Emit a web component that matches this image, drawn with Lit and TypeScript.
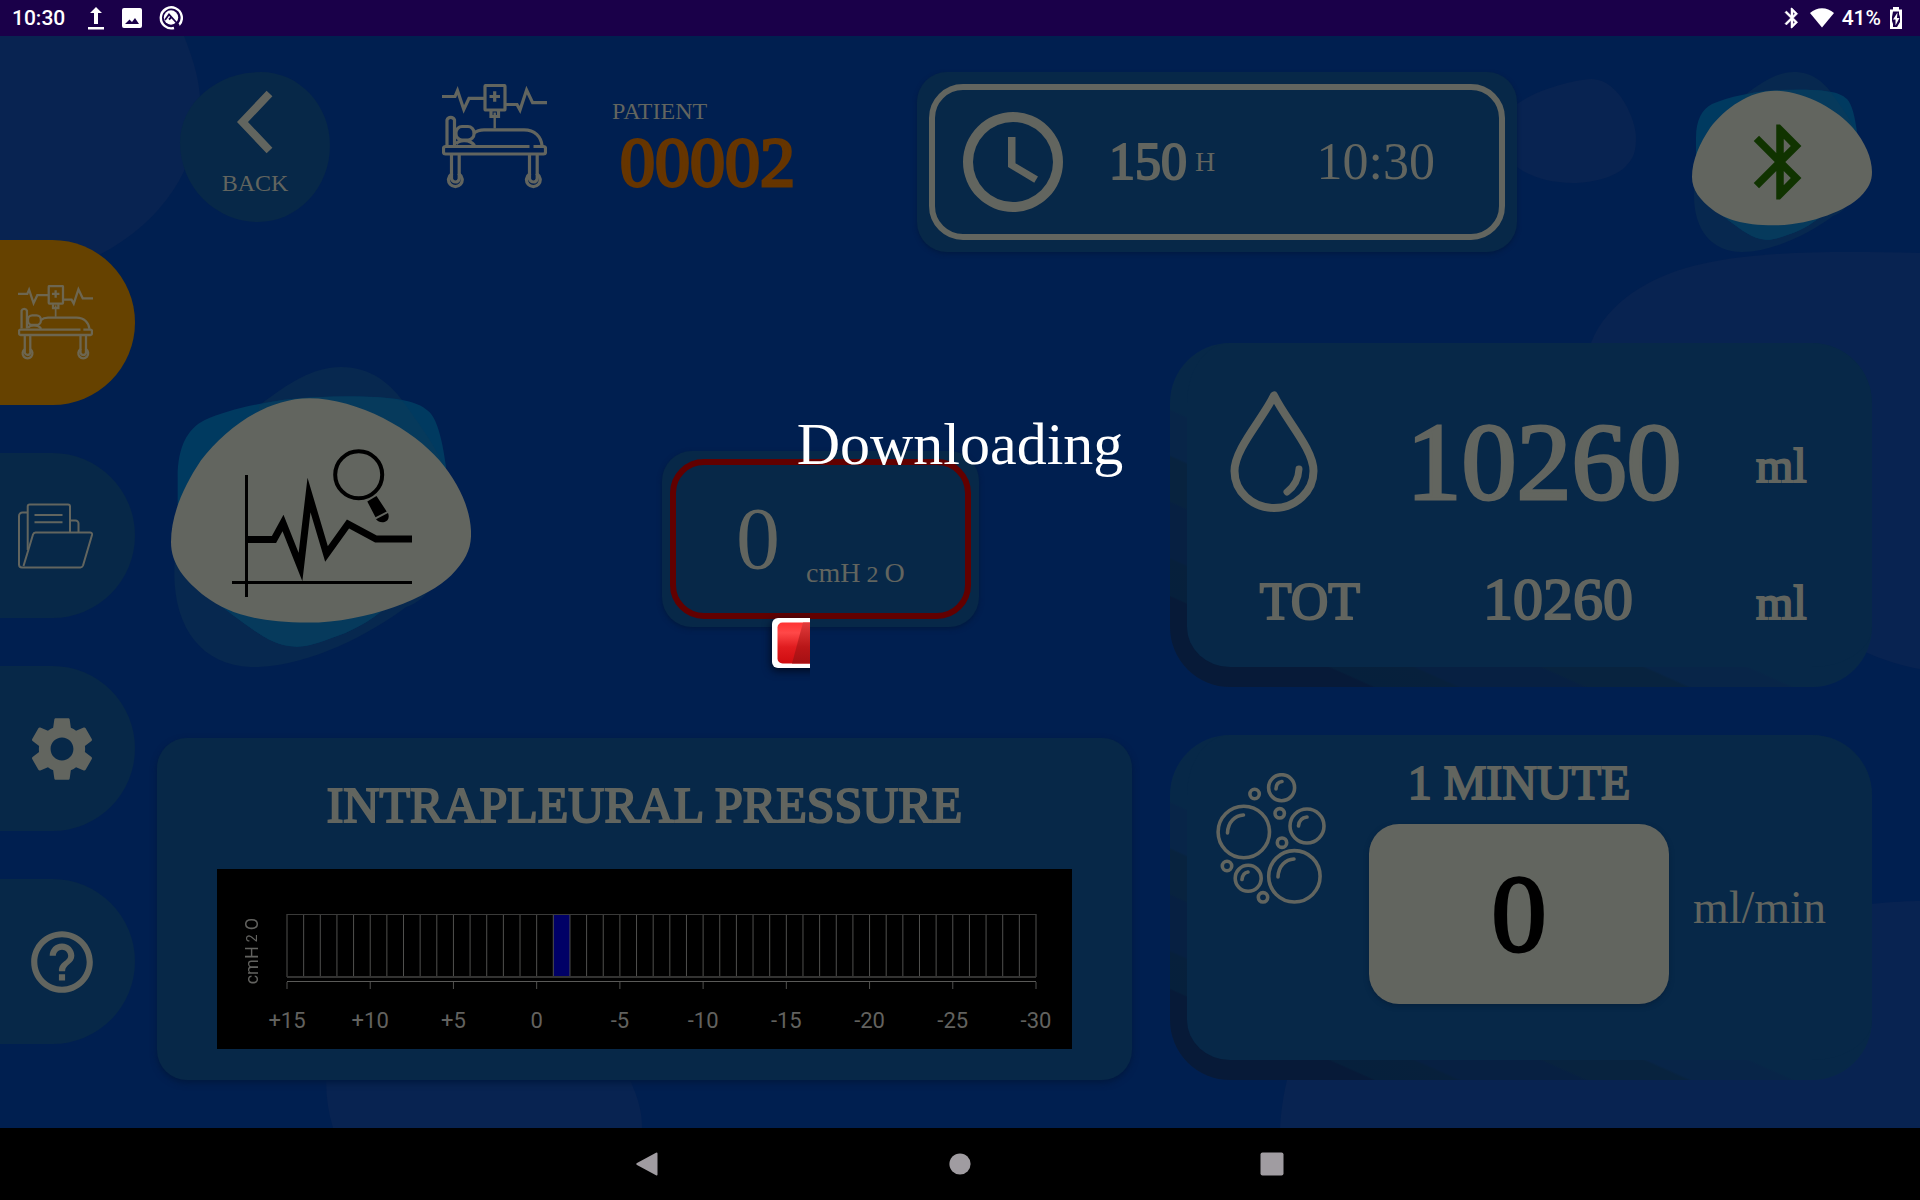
import { LitElement, html, svg, css } from "lit";
import { customElement, property } from "lit/decorators.js";

const bedIcon = svg`
  <g fill="none" stroke="currentColor" stroke-width="3.200">
    <path d="M0 12.5H13L15.5 6.5 21.8 25.5 27 14.3H42"/>
    <path d="M64 20.5H75L78 26 84.6 6 90.6 18.7H105"/>
    <rect x="43" y="1.5" width="20" height="24.5" rx="1"/>
    <path d="M47.5 12.5H58M52.7 7.3V17.7"/>
    <path d="M49 27V32.5H56.5V27"/>
    <path stroke-width="2.4" d="M52.7 28.5V44.5"/>
    <path d="M5 61V36A4 4 0 0 1 12.5 36V61"/>
    <rect x="14" y="42.5" width="18" height="13.5" rx="6"/>
    <path d="M14 60C17 55.500 28 55 32.500 61.500"/>
    <path d="M31.500 49.500C35 46.500 38 45.800 42 45.800H82C93 45.800 99 53 100 61.500"/>
    <path d="M87.500 62.500H3.500A2 2 0 0 0 1.500 64.500V68A2 2 0 0 0 3.500 70H101.500A2 2 0 0 0 103.500 68V64.500A2 2 0 0 0 101.500 62.500H91.500"/>
    <path d="M9.500 70V91M17.200 70V91M87.500 70V91M95.200 70V91"/>
    <path d="M9.500 90A6.900 6.900 0 1 0 17.200 90M87.500 90A6.900 6.900 0 1 0 95.200 90"/>
    <path d="M9.500 90V95C11 99 16 99 17.200 95V90M87.500 90V95C89 99 94 99 95.200 95V90"/>
  </g>`;

const blobShapes = svg`
  <path fill="#07284f" d="M102 0C120 0 132 10 141 23C155 42 165 60 168 90C168 120 155 140 141 144C120 160 82 180 50 180C20 180 2 158 2 124C2 80 30 40 53 23C70 10 85 0 102 0Z"/>
  <path fill="#003a60" d="M4 81V66C4 48 10 37 20 32C40 23 70 17.700 105 17.700C130 17.700 147 19 155 27C160 32 163 45 165 60V100C140 140 120 155 95 163C85 167 78 168 74 167.700C60 167 50 158 36 148C10 130 4 100 4 81Z"/>
  <path fill="#063a5c" d="M53 23C64 19 84 17.700 105 17.700C120 17.700 130 18 139 20.500C152 38 160 50 165 62V100C140 140 120 155 95 163C85 167 78 168 74 167.700C60 167 50 158 36 148Z"/>
  <path fill="#62655f" d="M83 18.700C112 18.700 146 38 161 56C173 70 180 86 180 100C180 109 177 116 168 125C155 138 118 153.300 82 153.300C50 153.300 33 147 21 138C8 128 0 118 0 105C0 88 8 71 18 56C33 36 58 18.700 83 18.700Z"/>`;

const bluetoothPath =
  "M17.71 7.71L12 2h-1v7.59L6.41 5 5 6.41 10.59 12 5 17.59 6.41 19 11 14.41V22h1l5.710-5.710-4.300-4.290 4.300-4.290zM13 5.830l1.880 1.880L13 9.590V5.830zm1.880 10.460L13 18.170v-3.760l1.880 1.880z";

const bubbleIcon = svg`
  <g fill="none" stroke="currentColor" stroke-width="3.600">
    ${[
      [65.6, 14.7, 13], [38.6, 21, 4.7], [27.8, 59, 25.7], [63.7, 40.3, 4.7], [91, 53, 17],
      [66, 69.7, 4.7], [11, 93, 4.7], [32.2, 105.3, 13], [78.4, 103.3, 25.7], [47, 124.3, 4.7],
    ].map(([x, y, r]) => svg`<circle cx=${x} cy=${y} r=${r}/>`)}
    <path stroke-linecap="round" d="M11.500 60C12 49 19 42.500 27.500 42M62 104C62.500 93 69.500 86.500 78 86M60 16C60 11.500 62.500 9 66 8.500M82.500 53C83 47.500 86 44.500 91 44M26 106.500C26.500 102 28.500 99.500 32 99"/>
  </g>`;

@customElement("status-bar")
export class StatusBar extends LitElement {
  @property() time = "";
  @property() battery = "";

  static styles = css`
    :host {
      display: flex;
      align-items: center;
      justify-content: space-between;
      height: 36px;
      padding: 0 17px 0 12px;
      background: #1a0049;
      color: #fff;
      font: 500 21px/36px Roboto, sans-serif;
    }
    .group { display: flex; align-items: center; gap: 8px; }
    .icons { display: flex; align-items: center; gap: 17px; margin-left: 14px; }
    svg { display: block; fill: currentColor; }
  `;

  render() {
    return html`
      <div class="group">
        <span>${this.time}</span>
        <div class="icons">
          <svg width="18" height="24" viewBox="0 0 18 24"><path d="M9 1L15 7H11V18H7V7H3ZM1 21H17V23.500H1Z"/></svg>
          <svg width="20" height="20" viewBox="0 0 20 20"><path fill-rule="evenodd" d="M2 0H18A2 2 0 0 1 20 2V18A2 2 0 0 1 18 20H2A2 2 0 0 1 0 18V2A2 2 0 0 1 2 0ZM3 16H17L13 10 10 14 7.500 11.500Z"/></svg>
          <svg width="24" height="24" viewBox="0 0 24 24">
            <path fill="none" stroke="#fff" stroke-width="2.400" d="M20 19A10.500 10.500 0 1 0 15 22"/>
            <circle cx="12" cy="11.500" r="7.200"/>
            <path fill="none" stroke="#1a0049" stroke-width="1.800" d="M6 14L10 8.500 20 19.500M10 13.500L12.500 11"/>
          </svg>
        </div>
      </div>
      <div class="group">
        <svg width="20" height="22" viewBox="3 1 18 22"><path stroke="#fff" stroke-width=".5" d=${bluetoothPath}/></svg>
        <svg width="24" height="20" viewBox="0 0 24 20"><path d="M0 5C7-1.500 17-1.500 24 5L12 19.500Z"/></svg>
        <span>${this.battery}</span>
        <svg width="14" height="22" viewBox="0 0 14 22">
          <path d="M4 0H10V2.500H13V22H1V2.500H4Z"/>
          <path fill="#1a0049" d="M4 4.500H10V7L11 10V15L8 20H4V17L3 14V10Z"/>
          <path d="M8.500 5.500L4 12.500H6.500V18.500L10.500 11H8Z"/>
        </svg>
      </div>
    `;
  }
}

@customElement("pressure-scale")
export class PressureScale extends LitElement {
  @property({ type: Number }) cells = 45;
  @property({ type: Number }) active = 16;

  static styles = css`
    :host {
      display: grid;
      grid-template-columns: 70px 1fr 36px;
      padding: 45px 0 15px;
      background: #000;
      color: #62625f;
      font: 22px/26px Roboto, sans-serif;
    }
    .unit {
      writing-mode: vertical-rl;
      transform: rotate(180deg);
      justify-self: center;
      align-self: start;
      margin-top: 4px;
      display: flex;
      align-items: center;
      gap: 4px;
      font-size: 18px;
      line-height: 20px;
    }
    .small { font-size: 14px; }
    .grid { display: block; width: 100%; height: 76px; }
    .labels { display: flex; justify-content: space-between; margin: 18px 0 0; padding: 0; list-style: none; }
    .labels li { display: flex; justify-content: center; width: 0; white-space: nowrap; }
  `;

  render() {
    const step = 749 / this.cells;
    const lines = Array.from({ length: this.cells + 1 }, (_, i) => i * step);
    return html`
      <div class="unit"><span>cmH</span><span class="small">2</span><span>O</span></div>
      <div>
        <svg class="grid" viewBox="0 0 749 76" preserveAspectRatio="none" overflow="visible">
          <rect x=${this.active * step} y="0" width=${step} height="63" fill="#000066"/>
          <g stroke="#50504e" stroke-width="1">
            ${lines.map((x) => svg`<line x1=${x} x2=${x} y1="0" y2="63"/>`)}
            ${lines.filter((_, i) => i % 5 === 0).map((x) => svg`<line x1=${x} x2=${x} y1="68" y2="75"/>`)}
          </g>
          <path stroke="#3a3a39" stroke-width="1" d="M0 .5H749"/>
          <path stroke="#333332" stroke-width="2" d="M0 63H749"/>
          <path stroke="#5a5a58" stroke-width="1" d="M0 67.500H749"/>
        </svg>
        <ul class="labels">
          ${["+15", "+10", "+5", "0", "-5", "-10", "-15", "-20", "-25", "-30"].map((t) => html`<li>${t}</li>`)}
        </ul>
      </div>
    `;
  }
}

@customElement("app-root")
export class AppRoot extends LitElement {
  static styles = css`
    :host {
      display: grid;
      grid-template-rows: auto 1fr auto;
      min-height: 100vh;
      background: #001f50;
      color: #62655f;
      font-family: "Liberation Serif", serif;
    }
    button {
      border: 0;
      padding: 0;
      background: none;
      color: inherit;
      font: inherit;
      cursor: pointer;
    }
    svg { display: block; flex: none; }
    h2 { margin: 0; font-weight: 400; }

    .stage { position: relative; display: flex; }
    .backdrop { position: absolute; inset: 0; width: 100%; height: 100%; }

    .tabs {
      position: relative;
      display: flex;
      flex-direction: column;
      gap: 48px;
      width: 135px;
      padding-top: 204px;
    }
    .tab {
      display: flex;
      align-items: center;
      height: 165px;
      padding-left: 18px;
      border-radius: 0 84px 84px 0;
      background: #072848;
    }
    .tab.current { background: #664200; color: #6d6650; }
    .tab.solid { padding-left: 25px; }

    .main {
      position: relative;
      flex: 1;
      min-width: 0;
      padding: 36px 48px 48px 22px;
    }
    .header { display: flex; align-items: flex-start; padding-left: 23px; margin-bottom: 91px; }
    .back {
      display: flex;
      flex-direction: column;
      align-items: center;
      gap: 15px;
      width: 150px;
      height: 150px;
      padding-top: 18px;
      border-radius: 54% 46% 48% 52% / 47% 49% 51% 53%;
      background: #072848;
      font-size: 24px;
      line-height: 28px;
    }
    .bed { margin: 12px 65px 0 112px; }
    .patient { flex: 0 1 305px; padding-top: 25px; font-size: 24px; line-height: 28px; }
    .patient-id { padding-left: 8px; font-size: 70px; line-height: 76px; color: #663500; -webkit-text-stroke: 3px currentColor; }
    .clock {
      flex: 0 1 600px;
      padding: 12px;
      border-radius: 30px;
      background: #072848;
      box-shadow: 0 2px 4px #001a42;
      box-sizing: border-box;
    }
    .clock-face {
      display: flex;
      align-items: center;
      box-sizing: border-box;
      height: 156px;
      padding: 0 64px 0 28px;
      border: 6px solid #62655f;
      border-radius: 34px;
      font-size: 52px;
      line-height: 60px;
    }
    .hours { margin: 0 8px 0 46px; -webkit-text-stroke: 2px currentColor; }
    .hour-unit { font-size: 28px; }
    .now { margin-left: auto; }
    .link { margin-left: auto; }

    .columns { display: grid; grid-template-columns: 975fr 702fr; gap: 48px 38px; }
    .monitor { display: flex; align-items: center; padding-left: 14px; gap: 191px; }
    .trend { margin-top: 3px; }
    .reading {
      margin-top: 48px;
      flex: 0 1 317px;
      box-sizing: border-box;
      padding: 8px;
      border-radius: 30px;
      background: #072848;
      box-shadow: 0 2px 5px #00193f;
    }
    .reading-face {
      box-sizing: border-box;
      display: flex;
      align-items: center;
      gap: 26px;
      height: 160px;
      padding-left: 60px;
      border: 6px solid #620000;
      border-radius: 34px;
    }
    .reading-value { font-size: 88px; line-height: 100px; }
    .reading-unit { display: flex; align-items: baseline; gap: 6px; padding-top: 68px; font-size: 28px; line-height: 32px; }
    .sub { font-size: 24px; }

    .relief {
      position: relative;
      border-radius: 60px;
      background: linear-gradient(24deg, #071a38 13.7%, #06203c 14%, #07203c 19.4%, #072042 19.8%, #072042 28%, #08233f 28.4%, #08233f 35%, #082548 35.4%, #082548 42%, #072848 42.4%);
    }
    .face {
      box-sizing: border-box;
      height: 100%;
      border-radius: 60px;
      background: #072848 padding-box;
      border: 0 solid transparent;
      border-width: 0 0 20px 17px;
    }
    .volume {
      display: grid;
      grid-template-columns: 189px 1fr 146px;
      grid-template-rows: 142px 72px;
      row-gap: 30px;
      align-items: center;
      padding: 48px 0 32px;
    }
    .drop { justify-self: center; align-self: start; margin-right: 16px; }
    .big { justify-self: center; padding-right: 14px; font-size: 110px; line-height: 124px; -webkit-text-stroke: 3px currentColor; }
    .medium { justify-self: center; padding-left: 14px; font-size: 60px; line-height: 72px; -webkit-text-stroke: 2px currentColor; }
    .unit { padding: 8px 0 0 30px; font-size: 48px; line-height: 56px; -webkit-text-stroke: 2px currentColor; }
    .caption { justify-self: end; margin-right: 16px; font-size: 52px; line-height: 60px; -webkit-text-stroke: 2px currentColor; }
    .bottom { align-self: last baseline; }

    .minute { display: grid; grid-template-columns: 182px 300px 1fr; grid-template-rows: 56px 180px; row-gap: 13px; padding: 20px 0 55px; }
    .minute h2 { grid-area: 1 / 2; justify-self: center; font-size: 48px; line-height: 56px; -webkit-text-stroke: 2px currentColor; }
    .bubbles { grid-area: 1 / 1 / 3 / 2; justify-self: center; margin: 18px 14px 0 0; }
    .count {
      grid-area: 2 / 2;
      display: flex;
      align-items: center;
      justify-content: center;
      border-radius: 30px;
      background: #62655f;
      box-shadow: 0 2px 5px #06203c;
      color: #000;
      font-size: 110px;
      line-height: 124px;
      -webkit-text-stroke: 3px currentColor;
    }
    .rate { grid-area: 2 / 3; align-self: center; margin-bottom: 12px; padding-left: 24px; font-size: 46px; line-height: 52px; }

    .pressure {
      margin-top: 3px;
      padding: 37px 60px 31px;
      border-radius: 30px;
      background: #072848;
      box-shadow: 0 3px 6px #00193f;
    }
    .pressure h2 { margin-bottom: 34px; text-align: center; font-size: 50px; line-height: 60px; -webkit-text-stroke: 2px currentColor; }

    .overlay {
      position: absolute;
      inset: 0;
      display: flex;
      flex-direction: column;
      align-items: center;
      gap: 140px;
      padding-top: 374px;
      color: #fff;
      font-size: 60px;
      line-height: 68px;
    }
    .fill { filter: drop-shadow(-1px 3px 4px #000a20); }
    .progress { overflow: visible; clip-path: inset(-14px 338px -14px -14px); }

    .system { display: flex; justify-content: center; align-items: center; gap: 288px; height: 72px; background: #000; color: #a09ca1; }
    .system svg { fill: currentColor; }
  `;

  render() {
    return html`
      <status-bar time="10:30" battery="41%"></status-bar>
      <div class="stage">
        <svg class="backdrop" viewBox="0 0 1920 1092" preserveAspectRatio="none" fill="#082351">
          <path d="M0 0H184C196 30 201 52 200 72C197 130 165 185 99 219C60 245 30 255 0 258Z"/>
          <path d="M1517 68C1535 55 1570 44 1592 43C1620 44 1636 85 1636 101C1636 115 1634 122 1626 130C1615 142 1590 147 1573 147C1550 147 1530 141 1517 131Z"/>
          <path d="M1591 307C1607 266 1650 241 1693 230C1740 218 1800 214 1920 217V633C1890 628 1840 612 1780 560C1700 480 1570 420 1591 307Z"/>
          <path d="M1280 1092C1283 1050 1292 1000 1340 950C1450 880 1700 910 1800 880C1850 868 1900 865 1920 865V1092Z"/>
          <path d="M333 1092C325 1065 324 1040 330 1010C400 900 600 950 630 1044C638 1062 642 1075 642 1092Z"/>
        </svg>

        <nav class="tabs" aria-label="Sections">
          <button class="tab current" aria-label="Patient">
            <svg width="75" height="75" viewBox="0 0 105 105">${bedIcon}</svg>
          </button>
          <button class="tab" aria-label="Archive">
            <svg width="75" height="66" viewBox="0 0 75 66" fill="none" stroke="currentColor" stroke-width="2" stroke-linejoin="round">
              <path d="M9.500 9.500H4.500A3.500 3.500 0 0 0 1 13V61.500A3 3 0 0 0 4 64.500H62.500A3 3 0 0 0 65 62.500L74 32A2 2 0 0 0 72 29.500H17.500A3 3 0 0 0 15 31.500L5.500 63"/>
              <path d="M9.700 47V3.500A2 2 0 0 1 11.700 1.500H50A2 2 0 0 1 52 3.500V29M52 17.500H57.500A3 3 0 0 1 60.500 20.500V29M16.500 12H44.500M16.500 19.300H44.500"/>
            </svg>
          </button>
          <button class="tab solid" aria-label="Settings">
            <svg width="74" height="74" viewBox="0 0 24 24" fill="currentColor"><path d="M19.430 12.980c.04-.32.07-.64.07-.98s-.03-.66-.07-.98l2.110-1.650c.19-.15.24-.42.12-.64l-2-3.460c-.12-.22-.39-.3-.61-.22l-2.490 1c-.52-.4-1.080-.73-1.690-.98l-.38-2.650C14.460 2.180 14.250 2 14 2h-4c-.25 0-.46.18-.49.42l-.38 2.650c-.61.25-1.170.59-1.690.98l-2.490-1c-.23-.09-.49 0-.61.22l-2 3.460c-.13.22-.07.49.12.64l2.110 1.650c-.04.32-.07.65-.07.98s.03.66.07.98l-2.110 1.650c-.19.15-.24.42-.12.64l2 3.460c.12.22.39.3.61.22l2.490-1c.52.4 1.080.73 1.690.98l.38 2.650c.03.24.24.42.49.42h4c.25 0 .46-.18.49-.42l.38-2.650c.61-.25 1.170-.59 1.690-.98l2.490 1c.23.09.49 0 .61-.22l2-3.460c.12-.22.07-.49-.12-.64l-2.110-1.650zM12 15.700c-2.050 0-3.700-1.650-3.700-3.700s1.650-3.700 3.700-3.700 3.700 1.650 3.700 3.700-1.650 3.700-3.700 3.700z"/></svg>
          </button>
          <button class="tab solid" aria-label="Help">
            <svg width="74" height="74" viewBox="0 0 24 24" fill="currentColor"><path d="M11 18h2v-2h-2v2zm1-16C6.480 2 2 6.480 2 12s4.480 10 10 10 10-4.480 10-10S17.520 2 12 2zm0 18c-4.410 0-8-3.590-8-8s3.590-8 8-8 8 3.590 8 8-3.590 8-8 8zm0-14c-2.210 0-4 1.790-4 4h2c0-1.100.9-2 2-2s2 .9 2 2c0 2-3 1.750-3 5h2c0-2.250 3-2.500 3-5 0-2.210-1.790-4-4-4z"/></svg>
          </button>
        </nav>

        <main class="main">
          <header class="header">
            <button class="back">
              <svg width="44" height="64" viewBox="0 0 44 64"><path fill="none" stroke="currentColor" stroke-width="8" d="M36.500 3.500L9.500 32 36.500 60.500"/></svg>
              <span>BACK</span>
            </button>
            <svg class="bed" width="105" height="105" viewBox="0 0 105 105">${bedIcon}</svg>
            <div class="patient">
              <div>PATIENT</div>
              <div class="patient-id">00002</div>
            </div>
            <section class="clock" aria-label="Operating time">
              <div class="clock-face">
                <svg width="100" height="100" viewBox="2 2 20 20" fill="currentColor">
                  <path fill-rule="evenodd" d="M12 2A10 10 0 1 0 12 22A10 10 0 1 0 12 2ZM12 4A8 8 0 1 1 12 20A8 8 0 1 1 12 4ZM12.500 7H11V13L16.250 16.150 17 14.920 12.500 12.250Z"/>
                </svg>
                <span class="hours">150</span><span class="hour-unit">H</span>
                <time class="now">10:30</time>
              </div>
            </section>
            <button class="link" aria-label="Bluetooth">
              <svg width="180" height="180" viewBox="0 0 180 180">
                ${blobShapes}
                <path fill="#103300" transform="translate(43 45) scale(3.750)" d=${bluetoothPath}/>
              </svg>
            </button>
          </header>

          <div class="columns">
            <div class="monitor">
              <button class="trend" aria-label="Pressure trend">
                <svg width="300" height="300" viewBox="0 0 300 300">
                  <g transform="scale(1.667)">${blobShapes}</g>
                  <path fill="none" stroke="#000" stroke-width="3" d="M75.500 108V230M61 215.500H241"/>
                  <path fill="none" stroke="#000" stroke-width="7" stroke-miterlimit="20" d="M76 172.500H103L112 156 129.500 200 138 128 155.500 187 177 157 205 172H241"/>
                  <circle cx="187.700" cy="107.700" r="23.500" fill="none" stroke="#000" stroke-width="4"/>
                  <path d="M196.300 134.500L205.500 129 215.700 144.500 204.500 150.300ZM205 152.300L217 146C219 151 216.500 154 213.500 155C210 156 207 154.500 205 152.300Z"/>
                </svg>
              </button>
              <section class="reading" aria-label="Current pressure">
                <div class="reading-face">
                  <span class="reading-value">0</span>
                  <span class="reading-unit"><span>cmH</span><span class="sub">2</span><span>O</span></span>
                </div>
              </section>
            </div>

            <section class="relief" aria-label="Volume">
              <div class="face volume">
                <svg class="drop" width="88" height="121" viewBox="0 0 88 121" fill="none" stroke="currentColor">
                  <path stroke-width="8" stroke-linejoin="round" d="M44 4.500C32 29 4.500 58 4.500 80A39.500 37 0 0 0 83.500 80C83.500 58 56 29 44 4.500Z"/>
                  <path stroke-width="7" stroke-linecap="round" d="M69 78C68.500 87 65 95 57 101"/>
                </svg>
                <span class="big">10260</span>
                <span class="unit">ml</span>
                <span class="caption bottom">TOT</span>
                <span class="medium bottom">10260</span>
                <span class="unit bottom">ml</span>
              </div>
            </section>

            <section class="pressure">
              <h2>INTRAPLEURAL PRESSURE</h2>
              <pressure-scale></pressure-scale>
            </section>

            <section class="relief">
              <div class="face minute">
                <svg class="bubbles" width="110" height="131" viewBox="0 0 110 131">${bubbleIcon}</svg>
                <h2>1 MINUTE</h2>
                <div class="count">0</div>
                <span class="rate">ml/min</span>
              </div>
            </section>
          </div>
        </main>

        <div class="overlay" role="alertdialog" aria-modal="true" aria-labelledby="progress-title">
          <div id="progress-title">Downloading</div>
          <svg class="progress" width="376" height="50" viewBox="0 0 376 50" role="img" aria-label="In progress">
            <defs>
              <linearGradient id="red" x1="0" y1="0" x2="0" y2="1">
                <stop offset="0" stop-color="#f33"/><stop offset=".25" stop-color="#ff4848"/><stop offset=".6" stop-color="#e01c1f"/><stop offset="1" stop-color="#cf0c10"/>
              </linearGradient>
              <linearGradient id="shade" x1="0" y1="0" x2="0" y2="1">
                <stop offset="0" stop-color="#e23c3c"/><stop offset=".6" stop-color="#b81618"/><stop offset="1" stop-color="#a51013"/>
              </linearGradient>
            </defs>
            <rect class="fill" width="376" height="50" rx="6" fill="#fff"/>
            <rect x="5.500" y="4.500" width="366" height="41" rx="5" fill="url(#red)"/>
            <path fill="url(#shade)" d="M31 4.500H60V45.500H20Z"/>
          </svg>
        </div>
      </div>

      <nav class="system" aria-label="System">
        <button aria-label="Back"><svg width="24" height="24" viewBox="0 0 24 24"><path d="M21.500 1.500V22.500A1 1 0 0 1 20 23.300L1 13A1.200 1.200 0 0 1 1 11L20 .7A1 1 0 0 1 21.500 1.500Z"/></svg></button>
        <button aria-label="Home"><svg width="24" height="24" viewBox="0 0 24 24"><circle cx="12" cy="12" r="10.600"/></svg></button>
        <button aria-label="Recent apps"><svg width="24" height="24" viewBox="0 0 24 24"><rect x=".5" y=".5" width="23" height="23" rx="2"/></svg></button>
      </nav>
    `;
  }
}
